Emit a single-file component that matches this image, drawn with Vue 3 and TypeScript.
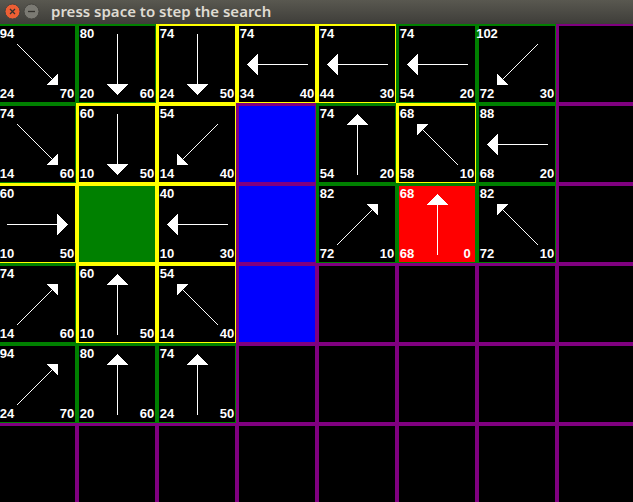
<script setup lang="ts">
type Heading = 'n' | 'ne' | 'e' | 'se' | 's' | 'sw' | 'w' | 'nw'
type Frame = 'idle' | 'open' | 'closed'
type Fill = 'empty' | 'wall' | 'start' | 'goal'

interface Cell {
  frame: Frame
  fill: Fill
  f?: number
  g?: number
  h?: number
  heading?: Heading
}

const open = (f: number, g: number, h: number, heading: Heading, fill: Fill = 'empty'): Cell =>
  ({ frame: 'open', fill, f, g, h, heading })
const closed = (f: number, g: number, h: number, heading: Heading): Cell =>
  ({ frame: 'closed', fill: 'empty', f, g, h, heading })
const idle = (): Cell => ({ frame: 'idle', fill: 'empty' })
const wall = (): Cell => ({ frame: 'idle', fill: 'wall' })
const start = (): Cell => ({ frame: 'closed', fill: 'start' })

const rows: Cell[][] = [
  [open(94, 24, 70, 'se'), open(80, 20, 60, 's'), closed(74, 24, 50, 's'), closed(74, 34, 40, 'w'),
    closed(74, 44, 30, 'w'), open(74, 54, 20, 'w'), open(102, 72, 30, 'sw'), idle()],
  [open(74, 14, 60, 'se'), closed(60, 10, 50, 's'), closed(54, 14, 40, 'sw'), wall(),
    open(74, 54, 20, 'n'), closed(68, 58, 10, 'nw'), open(88, 68, 20, 'w'), idle()],
  [closed(60, 10, 50, 'e'), start(), closed(40, 10, 30, 'w'), wall(),
    open(82, 72, 10, 'ne'), open(68, 68, 0, 'n', 'goal'), open(82, 72, 10, 'nw'), idle()],
  [open(74, 14, 60, 'ne'), closed(60, 10, 50, 'n'), closed(54, 14, 40, 'nw'), wall(),
    idle(), idle(), idle(), idle()],
  [open(94, 24, 70, 'ne'), open(80, 20, 60, 'n'), open(74, 24, 50, 'n'), idle(),
    idle(), idle(), idle(), idle()],
  [idle(), idle(), idle(), idle(), idle(), idle(), idle(), idle()],
]

const cells = rows.flat()

const arrows: Record<Heading, { shaft: string; head: string }> = {
  n: { shaft: 'M38.5 18V69', head: 'M38.5 8L49 19H28Z' },
  s: { shaft: 'M38.5 8V59', head: 'M38.5 69L49 58H28Z' },
  w: { shaft: 'M18 38.5H69', head: 'M8 38.5L19 28V49Z' },
  e: { shaft: 'M8 38.5H59', head: 'M69 38.5L58 28V49Z' },
  nw: { shaft: 'M22 22L59 59', head: 'M18 18H29.5L18 29.5Z' },
  ne: { shaft: 'M55 22L18 59', head: 'M59 18H47.5L59 29.5Z' },
  sw: { shaft: 'M22 55L59 18', head: 'M18 59H29.5L18 47.5Z' },
  se: { shaft: 'M18 18L55 55', head: 'M59 59H47.5L59 47.5Z' },
}
</script>

<template>
  <div class="window">
    <header class="titlebar">
      <button class="control close" type="button" aria-label="Close">
        <svg viewBox="0 0 17 17" width="17" height="17">
          <circle class="disc" cx="8.5" cy="8.5" r="7.5" />
          <path class="mark" d="M6 6L11 11M11 6L6 11" />
        </svg>
      </button>
      <button class="control minimize" type="button" aria-label="Minimize">
        <svg viewBox="0 0 17 17" width="17" height="17">
          <circle class="disc" cx="8.5" cy="8.5" r="7.5" />
          <path class="mark" d="M5 8.5H12" />
        </svg>
      </button>
      <h1 class="title">press space to step the search</h1>
    </header>
    <main class="viewport">
      <div class="board">
        <div v-for="(cell, i) in cells" :key="i" class="cell" :class="[cell.frame, cell.fill]">
          <template v-if="cell.heading">
            <svg class="arrow" viewBox="0 0 76 76" width="76" height="76" aria-hidden="true">
              <path class="shaft" :d="arrows[cell.heading].shaft" />
              <path class="head" :d="arrows[cell.heading].head" />
            </svg>
            <span class="score total">{{ cell.f }}</span>
            <span class="score cost">{{ cell.g }}</span>
            <span class="score estimate">{{ cell.h }}</span>
          </template>
        </div>
      </div>
    </main>
  </div>
</template>

<style>
body {
  margin: 0;
  background: #000;
}
</style>

<style scoped>
.window {
  display: flex;
  flex-direction: column;
  height: 100vh;
  overflow: hidden;
  background: #000;
}

.titlebar {
  display: flex;
  flex: none;
  align-items: center;
  gap: 2px;
  box-sizing: border-box;
  height: 24px;
  padding: 0 4px 2px;
  background: linear-gradient(#595850, #3e3d39);
}

.control {
  display: block;
  width: 17px;
  height: 17px;
  padding: 0;
  border: 0;
  background: none;
}

.control svg {
  display: block;
}

.disc {
  fill: #7b7a73;
  stroke: #45443f;
}

.close .disc {
  fill: #ee5f34;
}

.mark {
  fill: none;
  stroke: #33312d;
  stroke-width: 1.3;
}

.title {
  margin: 0 0 0 9px;
  color: #dfdbd2;
  font: 600 15px/20px "Noto Sans", "Open Sans", sans-serif;
  white-space: nowrap;
}

.viewport {
  flex: 1;
  min-height: 0;
  overflow: hidden;
}

.board {
  display: grid;
  grid-template-columns: repeat(8, 80px);
  grid-auto-rows: 80px;
  margin: -1px 0 0 -4px;
}

.cell {
  display: grid;
  grid-template: 76px / 76px;
  box-sizing: border-box;
  border-style: solid;
  border-width: 3px 1px 1px 3px;
}

.cell > * {
  grid-area: 1 / 1;
}

.idle { border-color: #800080; }
.open { border-color: #008000; }
.closed { border-color: #ffff00; }

.wall { background: #0000ff; }
.start { background: #008000; }
.goal { background: #ff0000; }

.arrow {
  display: block;
  shape-rendering: crispEdges;
}

.shaft {
  fill: none;
  stroke: #fff;
}

.head {
  fill: #fff;
}

.score {
  display: flex;
  justify-content: center;
  width: 16px;
  color: #fff;
  font: bold 13px/16px "Liberation Sans", Arial, sans-serif;
}

.total { place-self: start; }
.cost { place-self: end start; }
.estimate { place-self: end; }
</style>
